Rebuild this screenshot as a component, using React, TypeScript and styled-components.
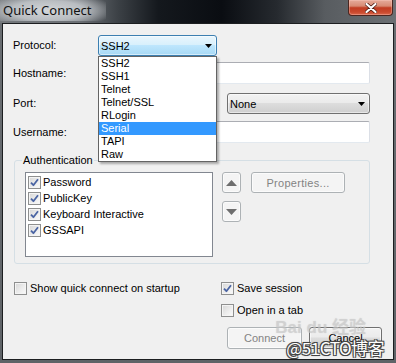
import styled, { createGlobalStyle } from 'styled-components'

const GlobalStyle = createGlobalStyle`
  html, body {
    margin: 0;
    padding: 0;
  }
  body {
    width: 396px;
    height: 363px;
    overflow: hidden;
    background: #676b6f;
    font-family: "Liberation Sans", Arial, sans-serif;
    font-size: 11px;
    color: #000;
  }
  * {
    box-sizing: border-box;
  }
`

const Window = styled.div`
  position: relative;
  width: 396px;
  height: 363px;
  display: flex;
  flex-direction: column;
  background: linear-gradient(to bottom, #6a6e72 0%, #5f6367 100%);
`

const TitleBar = styled.div`
  height: 23px;
  flex: none;
  display: flex;
  align-items: flex-start;
  justify-content: space-between;
  background: linear-gradient(
    to right,
    #74787c 0%,
    #6c7075 20%,
    #3b4045 30%,
    #14181d 40%,
    #0a0d12 56%,
    #262a2f 70%,
    #585c60 82%,
    #6c7074 100%
  );
`

const Title = styled.span`
  font-family: "Noto Sans", "Open Sans", sans-serif;
  font-size: 13px;
  line-height: 21px;
  padding: 0 14px 0 3px;
  color: #111;
  background: radial-gradient(
    ellipse 64% 85% at 45% 50%,
    rgba(216, 219, 222, 0.95) 0%,
    rgba(198, 202, 206, 0.85) 55%,
    rgba(140, 145, 150, 0) 100%
  );
`

const CloseButton = styled.div`
  width: 45px;
  height: 16px;
  margin-right: 3px;
  display: flex;
  align-items: center;
  justify-content: center;
  border: 1px solid #4b2620;
  border-top: none;
  border-radius: 0 0 4px 4px;
  background: linear-gradient(
    to bottom,
    #e5ab9a 0%,
    #d88b74 40%,
    #c13d22 52%,
    #c9482d 80%,
    #d9674b 100%
  );
  box-shadow: inset 0 0 0 1px rgba(255, 210, 200, 0.35);
`

const Client = styled.div`
  flex: 1;
  position: relative;
  margin: 0 2px 3px 2px;
  border: 1px solid #1c1e20;
  background: #f0f0f0;
  padding: 11px 0 0 10px;
  display: flex;
  flex-direction: column;
`

const FieldRow = styled.div<{ $gap: number; $h: number }>`
  display: grid;
  grid-template-columns: 85px 272px;
  align-items: center;
  margin-top: ${(p) => p.$gap}px;
  height: ${(p) => p.$h}px;
`

const Label = styled.span`
  line-height: 13px;
`

const ComboWrap = styled.div`
  position: relative;
  width: 119px;
  height: 100%;
  z-index: 5;
`

const Combo = styled.div<{ $open?: boolean; $w?: number }>`
  width: ${(p) => (p.$w ? `${p.$w}px` : '100%')};
  height: 100%;
  display: flex;
  align-items: center;
  justify-content: space-between;
  padding: 0 4px 0 2px;
  border: 1px solid ${(p) => (p.$open ? '#3c7fb1' : '#707070')};
  border-radius: 3px;
  background: ${(p) =>
    p.$open
      ? 'linear-gradient(to bottom, #eaf6fd 0%, #d9f0fc 45%, #bee6fd 50%, #a7d9f5 100%)'
      : 'linear-gradient(to bottom, #f2f2f2 0%, #ebebeb 45%, #dddddd 50%, #cfcfcf 100%)'};
  box-shadow: inset 0 0 0 1px rgba(255, 255, 255, 0.5);
`

const DropList = styled.div`
  position: absolute;
  top: 100%;
  left: 0;
  width: 119px;
  background: #fff;
  border: 1px solid #646464;
  box-shadow: 2px 2px 2px rgba(0, 0, 0, 0.3);
`

const DropItem = styled.div<{ $selected?: boolean }>`
  height: 13px;
  line-height: 13px;
  padding-left: 2px;
  background: ${(p) => (p.$selected ? '#3399ff' : 'transparent')};
  color: ${(p) => (p.$selected ? '#fff' : '#000')};
`

const TextInput = styled.div<{ $w?: number }>`
  width: ${(p) => (p.$w ? `${p.$w}px` : '100%')};
  height: 100%;
  background: #fff;
  border: 1px solid;
  border-color: #abadb3 #dbdfe6 #e3e9ef #e2e3ea;
  border-radius: 2px;
`

const PortControls = styled.div`
  display: flex;
  justify-content: space-between;
  height: 100%;
`

const GroupBox = styled.div`
  position: relative;
  margin: 17px 0 0 1px;
  width: 356px;
  height: 104px;
  border: 1px solid #d5dfe5;
  border-radius: 3px;
  padding: 11px 0 0 10px;
  display: flex;
  align-items: flex-start;
`

const Legend = styled.span`
  position: absolute;
  top: -7px;
  left: 7px;
  padding: 0 1px;
  line-height: 13px;
  background: #f0f0f0;
`

const ListBox = styled.div`
  width: 188px;
  height: 85px;
  background: #fff;
  border: 1px solid #828790;
  padding: 1px 0 0 2px;
`

const ListItem = styled.div`
  height: 16px;
  display: flex;
  align-items: center;
  gap: 2px;
`

const ArrowCol = styled.div`
  display: flex;
  flex-direction: column;
  gap: 8px;
  margin-left: 9px;
`

const Button = styled.div<{ $w: number; $h?: number; $disabled?: boolean }>`
  width: ${(p) => p.$w}px;
  height: ${(p) => p.$h ?? 21}px;
  display: flex;
  align-items: center;
  justify-content: center;
  border: 1px solid ${(p) => (p.$disabled ? '#adb2b5' : '#707070')};
  border-radius: 3px;
  color: ${(p) => (p.$disabled ? '#838383' : '#000')};
  background: ${(p) =>
    p.$disabled
      ? '#f4f4f4'
      : 'linear-gradient(to bottom, #f2f2f2 0%, #ebebeb 45%, #dddddd 50%, #cfcfcf 100%)'};
  box-shadow: inset 0 0 0 1px rgba(255, 255, 255, 0.6);
`

const PropsButton = styled(Button)`
  margin-left: 10px;
  letter-spacing: 0.3px;
`

const Bottom = styled.div`
  display: grid;
  grid-template-columns: 207px auto;
  margin: 18px 0 0 1px;
`

const CheckRow = styled.label`
  display: flex;
  align-items: center;
  gap: 3px;
  height: 13px;
  line-height: 13px;
`

const Stack = styled.div`
  display: flex;
  flex-direction: column;
  gap: 9px;
`

const ButtonRow = styled.div`
  display: flex;
  gap: 7px;
  margin: 1px 0 0 6px;
`

const Box = styled.span`
  width: 13px;
  height: 13px;
  flex: none;
  display: flex;
  align-items: center;
  justify-content: center;
  border: 1px solid #8e8f8f;
  background: linear-gradient(135deg, #d6d6d6 0%, #ececec 55%, #fbfbfb 100%);
  box-shadow: inset 0 0 0 1px #f4f4f4;
`

const Watermark = styled.div`
  position: absolute;
  right: 12px;
  bottom: 5px;
  font-family: "Noto Sans CJK SC", "Liberation Sans", sans-serif;
  font-size: 17px;
  line-height: 20px;
  color: #fff;
  letter-spacing: -0.5px;
  text-shadow: -1px -1px 0 #444, 1px -1px 0 #444, -1px 1px 0 #444, 1px 1px 0 #444,
    0 0 2px #333;
`

const FaintMark = styled.div`
  position: absolute;
  right: 30px;
  bottom: 26px;
  font-family: "Liberation Sans", "Noto Sans CJK SC", sans-serif;
  font-weight: bold;
  font-size: 17px;
  line-height: 18px;
  color: rgba(205, 205, 205, 0.55);
  text-shadow: 0 0 1px rgba(170, 170, 170, 0.4);
`

const Check = ({ checked }: { checked?: boolean }) => (
  <Box>
    {checked ? (
      <svg width="9" height="9" viewBox="0 0 9 9">
        <path
          d="M1 4.6 L3.4 7.2 L8 1.2"
          fill="none"
          stroke="#4a64a3"
          strokeWidth="1.8"
          strokeLinejoin="round"
        />
      </svg>
    ) : null}
  </Box>
)

const ComboArrow = () => (
  <svg width="7" height="4" viewBox="0 0 7 4">
    <path d="M0 0 H7 L3.5 4 Z" fill="#000" />
  </svg>
)

const Tri = ({ up }: { up?: boolean }) => (
  <svg width="11" height="6" viewBox="0 0 11 6">
    <path d={up ? 'M0 6 H11 L5.5 0 Z' : 'M0 0 H11 L5.5 6 Z'} fill="#6e6e6e" />
  </svg>
)

const protocols = ['SSH2', 'SSH1', 'Telnet', 'Telnet/SSL', 'RLogin', 'Serial', 'TAPI', 'Raw']
const authMethods = ['Password', 'PublicKey', 'Keyboard Interactive', 'GSSAPI']

export default function App() {
  return (
    <>
      <GlobalStyle />
      <Window>
        <TitleBar>
          <Title>Quick Connect</Title>
          <CloseButton>
            <svg width="12" height="10" viewBox="0 0 12 10">
              <path
                d="M1.5 1 L10.5 9 M10.5 1 L1.5 9"
                stroke="#4a1a12"
                strokeWidth="3.6"
                strokeLinecap="round"
              />
              <path
                d="M1.5 1 L10.5 9 M10.5 1 L1.5 9"
                stroke="#fff"
                strokeWidth="2.2"
                strokeLinecap="round"
              />
            </svg>
          </CloseButton>
        </TitleBar>
        <Client>
          <FieldRow $gap={0} $h={21}>
            <Label>Protocol:</Label>
            <ComboWrap>
              <Combo $open>
                <span>SSH2</span>
                <ComboArrow />
              </Combo>
              <DropList>
                {protocols.map((p) => (
                  <DropItem key={p} $selected={p === 'Serial'}>
                    {p}
                  </DropItem>
                ))}
              </DropList>
            </ComboWrap>
          </FieldRow>
          <FieldRow $gap={6} $h={22}>
            <Label>Hostname:</Label>
            <TextInput />
          </FieldRow>
          <FieldRow $gap={9} $h={21}>
            <Label>Port:</Label>
            <PortControls>
              <TextInput $w={117} />
              <Combo $w={143}>
                <span>None</span>
                <ComboArrow />
              </Combo>
            </PortControls>
          </FieldRow>
          <FieldRow $gap={7} $h={22}>
            <Label>Username:</Label>
            <TextInput />
          </FieldRow>
          <GroupBox>
            <Legend>Authentication</Legend>
            <ListBox>
              {authMethods.map((m) => (
                <ListItem key={m}>
                  <Check checked />
                  <span>{m}</span>
                </ListItem>
              ))}
            </ListBox>
            <ArrowCol>
              <Button $w={19} $disabled>
                <Tri up />
              </Button>
              <Button $w={19} $disabled>
                <Tri />
              </Button>
            </ArrowCol>
            <PropsButton $w={94} $disabled>
              Properties...
            </PropsButton>
          </GroupBox>
          <Bottom>
            <CheckRow>
              <Check />
              <span>Show quick connect on startup</span>
            </CheckRow>
            <Stack>
              <CheckRow>
                <Check checked />
                <span>Save session</span>
              </CheckRow>
              <CheckRow>
                <Check />
                <span>Open in a tab</span>
              </CheckRow>
              <ButtonRow>
                <Button $w={75} $h={22} $disabled>
                  Connect
                </Button>
                <Button $w={73} $h={22}>
                  Cancel
                </Button>
              </ButtonRow>
            </Stack>
          </Bottom>
        </Client>
        <FaintMark>Bai du 经验</FaintMark>
        <Watermark>@51CTO博客</Watermark>
      </Window>
    </>
  )
}
